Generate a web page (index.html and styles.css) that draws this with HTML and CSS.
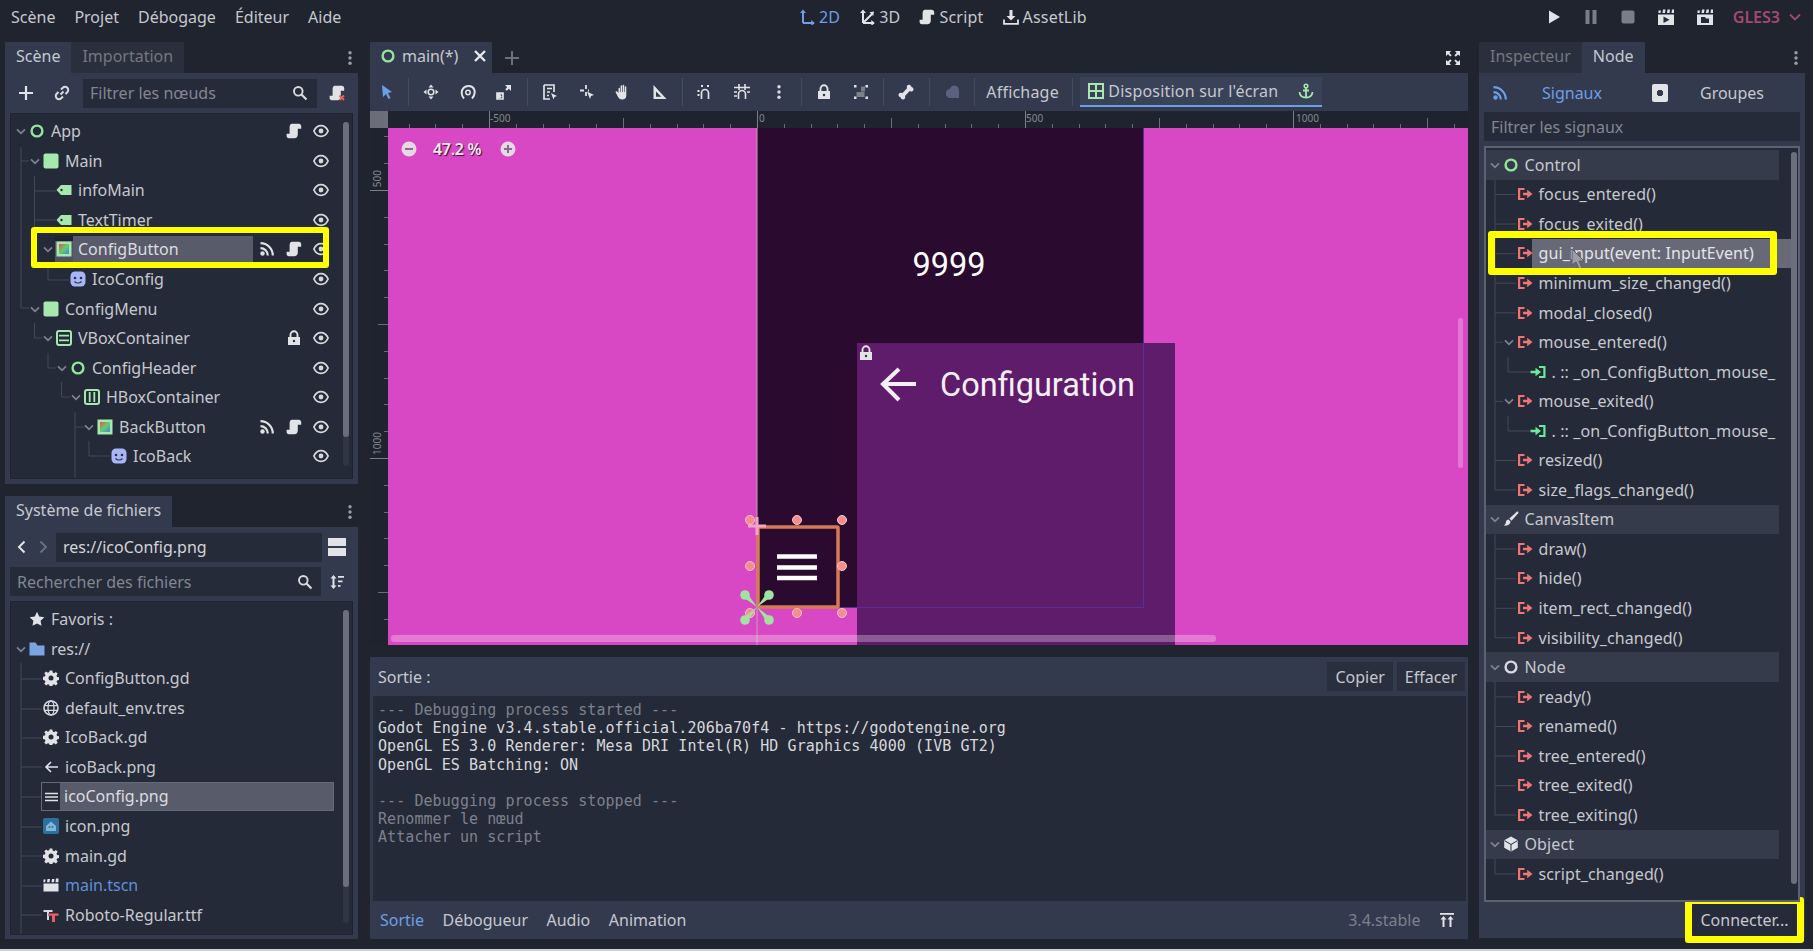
FILE: index.html
```html
<!DOCTYPE html>
<html lang="fr">
<head>
    <meta charset="UTF-8">
    <title>Godot Engine</title>
    <link rel="stylesheet" href="styles.css">
</head>
<body>
<svg class="defs" width="0" height="0">
    <defs>
        <linearGradient id="grad-btn" x1="0" y1="0" x2="1" y2="1">
            <stop offset="0" stop-color="#e8504f"/><stop offset=".5" stop-color="#5fd068"/><stop offset="1" stop-color="#4a7ff0"/>
        </linearGradient>
    </defs>
    <symbol id="i-eye" viewBox="0 0 16 16"><path d="M.9 8C2.7 4 5 2.6 8 2.6S13.3 4 15.1 8C13.3 12 11 13.4 8 13.4S2.7 12 .9 8z" fill="none" stroke="#d6d8dc" stroke-width="1.8"/><circle cx="8" cy="8" r="2.4" fill="#d6d8dc"/></symbol>
    <symbol id="i-script" viewBox="0 0 16 16"><path d="M6 .8h6.8c1.4 0 2.4 1 2.4 2.4v2.6h-3.4v5.6c0 2.2-1.3 3.800-3.4 3.800H2.800C1.400 15.200.6 14.200.6 13v-2.300h3V4.500C3.600 2.500 4.400.8 6 .8z" fill="#e2e3e6"/></symbol>
    <symbol id="i-script-x" viewBox="0 0 16 16"><path d="M6 .8h6.8c1.4 0 2.4 1 2.4 2.4v2.6h-3.4v5.6c0 2.2-1.3 3.800-3.4 3.800H2.800C1.400 15.200.6 14.200.6 13v-2.300h3V4.500C3.600 2.500 4.400.8 6 .8z" fill="#e2e3e6"/><path d="M10.500 10.500l4.500 4.500m0-4.500l-4.500 4.500" stroke="#ee5f5f" stroke-width="1.8"/></symbol>
    <symbol id="i-signal" viewBox="0 0 16 16"><circle cx="3.500" cy="12.500" r="2.200" fill="#e0e1e4"/><path d="M1.500 7.200a7.300 7.300 0 0 1 7.300 7.300M1.500 2.200a12.300 12.300 0 0 1 12.300 12.300" fill="none" stroke="#e0e1e4" stroke-width="2.2"/></symbol>
    <symbol id="i-signal-b" viewBox="0 0 16 16"><circle cx="3.500" cy="12.500" r="2.200" fill="#6d9fe6"/><path d="M1.500 7.200a7.300 7.300 0 0 1 7.300 7.300M1.500 2.200a12.300 12.300 0 0 1 12.300 12.300" fill="none" stroke="#6d9fe6" stroke-width="2.2"/></symbol>
    <symbol id="i-chev" viewBox="0 0 12 16"><path d="M2 6.300l4 4 4-4" fill="none" stroke="#7f838f" stroke-width="1.7"/></symbol>
    <symbol id="i-node-g" viewBox="0 0 16 16"><circle cx="8" cy="8" r="5.400" fill="none" stroke="#95e39e" stroke-width="2.4"/></symbol>
    <symbol id="i-node-w" viewBox="0 0 16 16"><circle cx="8" cy="8" r="5.400" fill="none" stroke="#d8dade" stroke-width="2.4"/></symbol>
    <symbol id="i-control" viewBox="0 0 16 16"><rect x=".5" y=".5" width="15" height="15" rx="2" fill="#a6e8ae"/></symbol>
    <symbol id="i-label" viewBox="0 0 16 16"><path d="M.5 8L5 3h10.500v10H5z" fill="#a6e8ae"/><circle cx="5.500" cy="8" r="1.200" fill="#252a38"/></symbol>
    <symbol id="i-tbtn" viewBox="0 0 16 16"><rect x=".5" y=".5" width="15" height="15" fill="#a6e8ae"/><rect x="3" y="3" width="10" height="10" fill="url(#grad-btn)"/></symbol>
    <symbol id="i-face" viewBox="0 0 16 16"><rect x=".5" y=".5" width="15" height="15" rx="4.500" fill="#a8b6f8"/><circle cx="5" cy="7" r="1.300" fill="#2c3142"/><circle cx="11" cy="7" r="1.300" fill="#2c3142"/><path d="M4.500 10.500c2 2 5 2 7 0" fill="none" stroke="#2c3142" stroke-width="1.2"/></symbol>
    <symbol id="i-vbox" viewBox="0 0 16 16"><rect x="1" y="1" width="14" height="14" rx="2" fill="none" stroke="#a6e8ae" stroke-width="2"/><path d="M3 5.700h10M3 10.300h10" stroke="#a6e8ae" stroke-width="1.8"/></symbol>
    <symbol id="i-hbox" viewBox="0 0 16 16"><rect x="1" y="1" width="14" height="14" rx="2" fill="none" stroke="#a6e8ae" stroke-width="2"/><path d="M5.700 3v10M10.300 3v10" stroke="#a6e8ae" stroke-width="1.8"/></symbol>
    <symbol id="i-lock" viewBox="0 0 16 16"><path d="M4.500 7V4.800a3.500 3.500 0 0 1 7 0V7" fill="none" stroke="#e2e3e6" stroke-width="1.9"/><path d="M2 7h12v8H2z" fill="#e2e3e6"/><circle cx="8" cy="11" r="1.200" fill="#2c3142"/></symbol>
    <symbol id="i-plus" viewBox="0 0 16 16"><path d="M8 1v14M1 8h14" stroke="#e2e3e6" stroke-width="2.2"/></symbol>
    <symbol id="i-plus-dim" viewBox="0 0 16 16"><path d="M8 1v14M1 8h14" stroke="#6d717d" stroke-width="2"/></symbol>
    <symbol id="i-close" viewBox="0 0 16 16"><path d="M3 3l10 10M13 3L3 13" stroke="#e8e9ec" stroke-width="2.4"/></symbol>
    <symbol id="i-link" viewBox="0 0 16 16"><path d="M6.500 9.500l3-3M7 4.500l1.800-1.800a3 3 0 0 1 4.500 4.500L11.500 9M9 11.500l-1.800 1.800a3 3 0 0 1-4.500-4.500L4.500 7" fill="none" stroke="#d8dade" stroke-width="2"/></symbol>
    <symbol id="i-search" viewBox="0 0 16 16"><circle cx="6.300" cy="6.300" r="4.300" fill="none" stroke="#d8dade" stroke-width="1.9"/><path d="M9.500 9.500l5 5" stroke="#d8dade" stroke-width="2.2"/></symbol>
    <symbol id="i-dots" viewBox="0 0 16 16"><circle cx="8" cy="2.800" r="1.700" fill="#9a9da6"/><circle cx="8" cy="8" r="1.700" fill="#9a9da6"/><circle cx="8" cy="13.200" r="1.700" fill="#9a9da6"/></symbol>
    <symbol id="i-dots-w" viewBox="0 0 16 16"><circle cx="8" cy="2.800" r="1.700" fill="#dcdde1"/><circle cx="8" cy="8" r="1.700" fill="#dcdde1"/><circle cx="8" cy="13.200" r="1.700" fill="#dcdde1"/></symbol>
    <symbol id="i-prev" viewBox="0 0 16 16"><path d="M10.500 2.500L5 8l5.500 5.500" fill="none" stroke="#e2e3e6" stroke-width="2"/></symbol>
    <symbol id="i-next" viewBox="0 0 16 16"><path d="M5.500 2.500L11 8l-5.500 5.500" fill="none" stroke="#6d717d" stroke-width="1.8"/></symbol>
    <symbol id="i-split" viewBox="0 0 20 20"><path d="M1 1h18v8H1zM1 11h18v8H1z" fill="#e2e3e6"/></symbol>
    <symbol id="i-sort" viewBox="0 0 16 16"><path d="M4.500 1l3 3.500h-2v7h2l-3 3.500-3-3.500h2v-7h-2z" fill="#e2e3e6"/><path d="M9 2h6v1.800H9zM9 6.500h4.500v1.800H9zM9 11h2.500v1.800H9z" fill="#e2e3e6"/></symbol>
    <symbol id="i-star" viewBox="0 0 16 16"><path d="M8 .8l2.200 4.700 5.100.7-3.700 3.500.9 5.100L8 12.400l-4.500 2.400.9-5.100L.7 6.200l5.100-.7z" fill="#e2e3e6"/></symbol>
    <symbol id="i-folder" viewBox="0 0 16 16"><path d="M.5 1.500h6l2 3h7v10H.5z" fill="#7aa4e4"/></symbol>
    <symbol id="i-gear" viewBox="0 0 16 16"><path d="M6.700.5h2.600l.4 2.100 1.400.6 1.800-1.200 1.800 1.800-1.200 1.800.6 1.400 2.100.4v2.600l-2.100.4-.6 1.400 1.200 1.800-1.800 1.800-1.800-1.200-1.400.6-.4 2.100H6.700l-.4-2.100-1.400-.6-1.800 1.200-1.800-1.800 1.200-1.800-.6-1.400-2.100-.4V6.900l2.100-.4.6-1.400-1.200-1.800 1.800-1.800 1.800 1.200 1.400-.6z" fill="#e2e3e6"/><circle cx="8" cy="8" r="2.500" fill="#252a38"/></symbol>
    <symbol id="i-globe" viewBox="0 0 16 16"><circle cx="8" cy="8" r="7" fill="none" stroke="#d8dade" stroke-width="1.6"/><ellipse cx="8" cy="8" rx="3" ry="7" fill="none" stroke="#d8dade" stroke-width="1.3"/><path d="M1 5.700h14M1 10.300h14" stroke="#d8dade" stroke-width="1.3"/></symbol>
    <symbol id="i-arrow" viewBox="0 0 16 16"><path d="M8 3L3 8l5 5M3 8h12" fill="none" stroke="#e2e3e6" stroke-width="1.6"/></symbol>
    <symbol id="i-burger" viewBox="0 0 16 16"><path d="M2 4.500h13M2 8h13M2 11.500h13" stroke="#e2e3e6" stroke-width="1.5"/></symbol>
    <symbol id="i-png" viewBox="0 0 16 16"><rect width="16" height="16" rx="2" fill="#2d6f9f"/><path d="M8 3.500l5 4.500v5H3V8z" fill="#83b5d8"/><circle cx="6.500" cy="9" r="1" fill="#2d6f9f"/><circle cx="9.500" cy="9" r="1" fill="#2d6f9f"/></symbol>
    <symbol id="i-scene" viewBox="0 0 16 16"><path d="M.5 6.500h15v8H.5zM.5 2.500h2.200l-.6 2.800H.5zM4.500 2H7l-.5 3.300H4zM9 2h2.500L11 5.300H8.500zM13 1.500h2.500v3.800h-3z" fill="#e2e3e6"/></symbol>
    <symbol id="i-font" viewBox="0 0 16 16"><path d="M.5 3h9v2H6v8H4V5H.5z" fill="#d8dade"/><path d="M5 6.500h10.500v2.200H12V15H9V8.700H5z" fill="#ee5f5f"/></symbol>
    <symbol id="i-out" viewBox="0 0 16 16"><path d="M1 2h6.500v2H3.200v8h4.300v2H1z" fill="#f07474"/><path d="M6 6.800h4.200V3.800L15.500 8l-5.300 4.200V9.200H6z" fill="#f07474"/></symbol>
    <symbol id="i-in" viewBox="0 0 16 16"><path d="M9 2h6.500v12H9v-2h4.300V4H9z" fill="#6ee89a"/><path d="M.5 6.800h5V3.800L11 8l-5.500 4.200V9.200h-5z" fill="#6ee89a"/></symbol>
    <symbol id="i-brush" viewBox="0 0 16 16"><path d="M15 .8c.6.5.5 1 0 1.700L8.500 9.800 6.400 7.600 13.500.9c.5-.4 1-.5 1.500-.1z" fill="#e2e3e6"/><path d="M5.500 8.600l2 2c0 2.800-3 4.600-6.800 3.900 1.800-1.200 2-2 2.200-3.600.2-1.200 1.300-2.200 2.600-2.300z" fill="#e2e3e6"/></symbol>
    <symbol id="i-cube" viewBox="0 0 16 16"><path d="M8 .5l6.800 3.800v7.400L8 15.500 1.200 11.700V4.300z" fill="#e2e3e6"/><path d="M8 8.500V15M1.500 4.600L8 8.500l6.500-3.900" fill="none" stroke="#252a38" stroke-width="1"/></symbol>
    <symbol id="i-2d" viewBox="0 0 16 16"><path d="M4 14V3M4 14h11" fill="none" stroke="#6d9fe6" stroke-width="2"/><path d="M4 .5L7 4H1zM15.800 14l-3.500 3v-6z" fill="#6d9fe6"/></symbol>
    <symbol id="i-3d" viewBox="0 0 16 16"><path d="M4 14V3M4 14l9-9M4 14h11" fill="none" stroke="#e2e3e6" stroke-width="2"/><path d="M4 .5L7 4H1zM15 2.500L14.200 7l-3.700-3.700zM15.800 14l-3.500 3v-6z" fill="#e2e3e6"/></symbol>
    <symbol id="i-asset" viewBox="0 0 16 16"><path d="M6.500 1h3v6h3L8 11.500 3.500 7h3z" fill="#e2e3e6"/><path d="M1 10.500v4.300h14v-4.300" fill="none" stroke="#e2e3e6" stroke-width="1.8"/></symbol>
    <symbol id="i-play" viewBox="0 0 16 16"><path d="M3 1.500v13L14 8z" fill="#e2e3e6"/></symbol>
    <symbol id="i-pause" viewBox="0 0 16 16"><path d="M2.500 1h4v14h-4zM9.500 1h4v14h-4z" fill="#7a7e8a"/></symbol>
    <symbol id="i-stop" viewBox="0 0 16 16"><rect x="1.500" y="1.500" width="13" height="13" rx="2" fill="#7a7e8a"/></symbol>
    <symbol id="i-play-scene" viewBox="0 0 18 18"><path d="M1 6.500h16V17H1zM1.500 2.500H4L3.500 5h-2zM6 1.500h2.500L8 5H5.500zM10.500 1.500H13L12.500 5H10zM15 1.500h2V5h-2.500z" fill="#e2e3e6"/><path d="M6.500 8.500V15l6-3.200z" fill="#252a38"/></symbol>
    <symbol id="i-play-custom" viewBox="0 0 18 18"><path d="M1 6.500h16V17H1zM1.500 2.500H4L3.500 5h-2zM6 1.500h2.500L8 5H5.500zM10.500 1.500H13L12.500 5H10zM15 1.500h2V5h-2.500z" fill="#e2e3e6"/><path d="M5 9h4l1 1.500h3V15H5z" fill="#252a38"/></symbol>
    <symbol id="i-chev-red" viewBox="0 0 12 16"><path d="M1 5.500l5 5 5-5" fill="none" stroke="#a14a70" stroke-width="1.8"/></symbol>
    <symbol id="i-full" viewBox="0 0 16 16"><path d="M1 1h5L4.400 2.900l2.300 2.300-1.400 1.400L3 4.300 1 6zM15 1v5l-1.900-1.600-2.300 2.300-1.400-1.400L11.700 3 10 1zM1 15v-5l1.900 1.600 2.300-2.300 1.400 1.400L4.300 13 6 15zM15 15h-5l1.600-1.900-2.300-2.300 1.400-1.400 2.300 2.300L15 10z" fill="#e2e3e6"/></symbol>
    <symbol id="i-select" viewBox="0 0 16 16"><path d="M3 1l10 7-4 1 2.500 5-2 1L7 10l-3 3z" fill="#6d9fe6"/></symbol>
    <symbol id="i-move" viewBox="0 0 16 16"><path d="M8 .5l2.500 3h-5zM8 15.500l-2.500-3h5zM.5 8l3-2.500v5zM15.500 8l-3 2.500v-5z" fill="#e2e3e6"/><circle cx="8" cy="8" r="2.800" fill="none" stroke="#e2e3e6" stroke-width="1.6"/></symbol>
    <symbol id="i-rotate" viewBox="0 0 16 16"><path d="M4 14.500C1 11.500 1 6.500 3.500 4S12 1 14 5c1.300 3 .7 6.500-2 9.500" fill="none" stroke="#e2e3e6" stroke-width="2"/><circle cx="8" cy="8.500" r="2.200" fill="none" stroke="#e2e3e6" stroke-width="1.5"/></symbol>
    <symbol id="i-scale" viewBox="0 0 16 16"><path d="M9 1h6v6l-2.200-2.200-2 2-1.600-1.600 2-2zM1 15V9h6v1.500H4l2 2L4.500 14z" fill="#e2e3e6"/><path d="M1 9h6v6H1z" fill="none" stroke="#e2e3e6" stroke-width="1.7"/></symbol>
    <symbol id="i-listsel" viewBox="0 0 16 16"><path d="M2 1h10v7M2 1v14h6M5 4.500h5M5 8h3M5 11.500h2" fill="none" stroke="#e2e3e6" stroke-width="1.7"/><path d="M9 9l6 3-2.500 1-1 2.500z" fill="#e2e3e6"/></symbol>
    <symbol id="i-pivot" viewBox="0 0 16 16"><path d="M7 1v4M7 8v4M1 6.500h4M9 6.500h1" stroke="#e2e3e6" stroke-width="1.8"/><path d="M8 7.500l7 3.500-3 1-1 3z" fill="#e2e3e6"/></symbol>
    <symbol id="i-hand" viewBox="0 0 16 16"><path d="M3.500 9V4.500c0-1 1.500-1 1.500 0V8h.6V2c0-1 1.500-1 1.500 0v6h.6V1.500c0-1 1.500-1 1.500 0V8h.6V3c0-1 1.500-1 1.500 0v8.500c0 2.500-1.500 4-4 4s-3.500-1-4.500-3L.7 8.500c-.5-1 .8-1.700 1.500-.9z" fill="#e2e3e6"/></symbol>
    <symbol id="i-ruler" viewBox="0 0 16 16"><path d="M1.500 1v14h13zM4 7.500v5.300h5.300z" fill="#e2e3e6" fill-rule="evenodd"/></symbol>
    <symbol id="i-snap" viewBox="0 0 16 16"><path d="M4.500 15V9a3.500 3.500 0 0 1 7 0v6" fill="none" stroke="#e2e3e6" stroke-width="1.7"/><path d="M4 1h2v2H4zM10 1h2v2h-2zM.5 6h2v2h-2zM.5 10h2v2h-2z" fill="#e2e3e6"/></symbol>
    <symbol id="i-snapgrid" viewBox="0 0 16 16"><path d="M4.500 15v-5a3.500 3.500 0 0 1 7 0v5M5 0v6M11 0v6M0 3.500h16M0 8h3M13 8h3M0 12h3" fill="none" stroke="#e2e3e6" stroke-width="1.6"/></symbol>
    <symbol id="i-group" viewBox="0 0 16 16"><path d="M1 1h2.500v2.500H1zM12.500 1H15v2.500h-2.500zM1 12.500h2.500V15H1zM12.500 12.500H15V15h-2.500z" fill="#e2e3e6"/><path d="M8 2.500h4v5H8zM3.500 8h8v5h-8z" fill="#7d808c"/></symbol>
    <symbol id="i-bone" viewBox="0 0 16 16"><path d="M11 .8c1.300 0 2.300 1 2.400 2.100 1.200.1 2.100 1.100 2.100 2.300 0 2-2.300 3-3.800 1.900L7 12c.8 1.700-.3 3.500-2.200 3.500-1.200 0-2.100-1-2.200-2.200C1.500 13.200.5 12.200.5 11c0-2 2.300-2.900 3.800-1.800L9 4.200C8.300 2.500 9.200.8 11 .8z" fill="#e2e3e6"/></symbol>
    <symbol id="i-cam" viewBox="0 0 16 16"><path d="M2 9c0-3 2-4 4-4 .5-2 2-3.500 4.500-3.500 3 0 4.500 2 4.500 6V14H5l-3-2.500z" fill="#5c6180"/></symbol>
    <symbol id="i-layout" viewBox="0 0 16 16"><rect x="1" y="1" width="14" height="14" fill="none" stroke="#a6e8ae" stroke-width="2"/><path d="M8 1v14M1 8h14" stroke="#a6e8ae" stroke-width="2"/></symbol>
    <symbol id="i-anchor" viewBox="0 0 16 16"><circle cx="8" cy="3" r="1.800" fill="none" stroke="#a6e8ae" stroke-width="1.5"/><path d="M8 5v9.500M5 7.500h6M1.500 9c.3 3.500 3 5.500 6.500 5.500s6.200-2 6.500-5.500" fill="none" stroke="#a6e8ae" stroke-width="1.8"/></symbol>
    <symbol id="i-expand" viewBox="0 0 16 16"><path d="M1 1h14v1.800H1z" fill="#e2e3e6"/><path d="M4.500 4l3 3.500h-2V15h-2V7.500h-2zM11.500 4l3 3.500h-2V15h-2V7.500h-2z" fill="#e2e3e6"/></symbol>
    <symbol id="i-circle-minus" viewBox="0 0 16 16"><circle cx="8" cy="8" r="7.500" fill="#e6d8e4"/><path d="M4 8h8" stroke="#8a6a86" stroke-width="2"/></symbol>
    <symbol id="i-circle-plus" viewBox="0 0 16 16"><circle cx="8" cy="8" r="7.500" fill="#e6d8e4"/><path d="M4 8h8M8 4v8" stroke="#8a6a86" stroke-width="2"/></symbol>
</svg>

<header class="menubar">
    <nav class="menu">
        <span>Scène</span><span>Projet</span><span>Débogage</span><span>Éditeur</span><span>Aide</span>
    </nav>
    <nav class="screens">
        <span class="screen active"><svg class="ic"><use href="#i-2d"/></svg>2D</span>
        <span class="screen"><svg class="ic"><use href="#i-3d"/></svg>3D</span>
        <span class="screen"><svg class="ic"><use href="#i-script"/></svg>Script</span>
        <span class="screen"><svg class="ic"><use href="#i-asset"/></svg>AssetLib</span>
    </nav>
    <div class="runbar">
        <svg class="ic"><use href="#i-play"/></svg>
        <svg class="ic"><use href="#i-pause"/></svg>
        <svg class="ic"><use href="#i-stop"/></svg>
        <svg class="ic big"><use href="#i-play-scene"/></svg>
        <svg class="ic big"><use href="#i-play-custom"/></svg>
        <span class="driver">GLES3</span>
        <svg class="chev"><use href="#i-chev-red"/></svg>
    </div>
</header>

<main class="workspace">
    <div class="col-left">
        <section class="dock dock-scene">
            <div class="tabs">
                <span class="tab active">Scène</span><span class="tab">Importation</span>
                <svg class="ic tab-menu"><use href="#i-dots"/></svg>
            </div>
            <div class="panel">
                <div class="filter-row">
                    <svg class="ic btn-add"><use href="#i-plus"/></svg>
                    <svg class="ic btn-link"><use href="#i-link"/></svg>
                    <div class="field scene-filter"><span class="hint">Filtrer les nœuds</span><svg class="ic"><use href="#i-search"/></svg></div>
                    <svg class="ic btn-end"><use href="#i-script-x"/></svg>
                </div>
                <div class="tree scene-tree">
                    <svg class="guides" width="343" height="366" viewBox="10 113 343 366"><path d="M21 147V308M21 161H29M21 308H29M34.500 176V250M34.500 191H56M34.500 220H56M48 265V280H69M34.500 323V338H42M48 353V368H56M61.500 382V397H70M75 412V479M75 427H84M89 441V456H110"/></svg>
                    <div class="row d0"><svg class="chev"><use href="#i-chev"/></svg><svg class="ic"><use href="#i-node-g"/></svg><span>App</span><span class="acts"><svg class="ic"><use href="#i-script"/></svg><svg class="ic"><use href="#i-eye"/></svg></span></div>
                    <div class="row d1"><svg class="chev"><use href="#i-chev"/></svg><svg class="ic"><use href="#i-control"/></svg><span>Main</span><span class="acts"><svg class="ic"><use href="#i-eye"/></svg></span></div>
                    <div class="row d2"><i class="nochev"></i><svg class="ic"><use href="#i-label"/></svg><span>infoMain</span><span class="acts"><svg class="ic"><use href="#i-eye"/></svg></span></div>
                    <div class="row d2"><i class="nochev"></i><svg class="ic"><use href="#i-label"/></svg><span>TextTimer</span><span class="acts"><svg class="ic"><use href="#i-eye"/></svg></span></div>
                    <div class="row d2"><svg class="chev"><use href="#i-chev"/></svg><span class="picked"><span class="picked-icon"><svg class="ic"><use href="#i-tbtn"/></svg></span><span class="picked-name">ConfigButton</span></span><span class="acts"><svg class="ic"><use href="#i-signal"/></svg><svg class="ic"><use href="#i-script"/></svg><svg class="ic"><use href="#i-eye"/></svg></span></div>
                    <div class="row d3"><i class="nochev"></i><svg class="ic"><use href="#i-face"/></svg><span>IcoConfig</span><span class="acts"><svg class="ic"><use href="#i-eye"/></svg></span></div>
                    <div class="row d1"><svg class="chev"><use href="#i-chev"/></svg><svg class="ic"><use href="#i-control"/></svg><span>ConfigMenu</span><span class="acts"><svg class="ic"><use href="#i-eye"/></svg></span></div>
                    <div class="row d2"><svg class="chev"><use href="#i-chev"/></svg><svg class="ic"><use href="#i-vbox"/></svg><span>VBoxContainer</span><span class="acts"><svg class="ic"><use href="#i-lock"/></svg><svg class="ic"><use href="#i-eye"/></svg></span></div>
                    <div class="row d3"><svg class="chev"><use href="#i-chev"/></svg><svg class="ic"><use href="#i-node-g"/></svg><span>ConfigHeader</span><span class="acts"><svg class="ic"><use href="#i-eye"/></svg></span></div>
                    <div class="row d4"><svg class="chev"><use href="#i-chev"/></svg><svg class="ic"><use href="#i-hbox"/></svg><span>HBoxContainer</span><span class="acts"><svg class="ic"><use href="#i-eye"/></svg></span></div>
                    <div class="row d5"><svg class="chev"><use href="#i-chev"/></svg><svg class="ic"><use href="#i-tbtn"/></svg><span>BackButton</span><span class="acts"><svg class="ic"><use href="#i-signal"/></svg><svg class="ic"><use href="#i-script"/></svg><svg class="ic"><use href="#i-eye"/></svg></span></div>
                    <div class="row d6"><i class="nochev"></i><svg class="ic"><use href="#i-face"/></svg><span>IcoBack</span><span class="acts"><svg class="ic"><use href="#i-eye"/></svg></span></div>
                    <div class="row d6"><span class="acts"><svg class="ic"><use href="#i-eye"/></svg></span></div>
                    <div class="scroll scene-scroll"><b></b></div>
                    <div class="mark mark-config"></div>
                </div>
            </div>
        </section>

        <section class="dock dock-files">
            <div class="tabs">
                <span class="tab active">Système de fichiers</span>
                <svg class="ic tab-menu"><use href="#i-dots"/></svg>
            </div>
            <div class="panel">
                <div class="path-row">
                    <svg class="ic"><use href="#i-prev"/></svg>
                    <svg class="ic"><use href="#i-next"/></svg>
                    <div class="field path-field">res://icoConfig.png</div>
                    <svg class="ic split"><use href="#i-split"/></svg>
                </div>
                <div class="search-row">
                    <div class="field file-search"><span class="hint">Rechercher des fichiers</span><svg class="ic"><use href="#i-search"/></svg></div>
                    <svg class="ic"><use href="#i-sort"/></svg>
                </div>
                <div class="tree file-tree">
                    <svg class="guides" width="343" height="334" viewBox="10 601 343 334"><path d="M21 663V935M21 679H42M21 709H42M21 738H42M21 767H42M21 797H42M21 827H42M21 856H42M21 886H42M21 915H42"/></svg>
                    <div class="row d0"><i class="nochev"></i><svg class="ic"><use href="#i-star"/></svg><span>Favoris :</span></div>
                    <div class="row d0"><svg class="chev"><use href="#i-chev"/></svg><svg class="ic"><use href="#i-folder"/></svg><span>res://</span></div>
                    <div class="row d1"><i class="nochev"></i><svg class="ic"><use href="#i-gear"/></svg><span>ConfigButton.gd</span></div>
                    <div class="row d1"><i class="nochev"></i><svg class="ic"><use href="#i-globe"/></svg><span>default_env.tres</span></div>
                    <div class="row d1"><i class="nochev"></i><svg class="ic"><use href="#i-gear"/></svg><span>IcoBack.gd</span></div>
                    <div class="row d1"><i class="nochev"></i><svg class="ic"><use href="#i-arrow"/></svg><span>icoBack.png</span></div>
                    <div class="row d1"><i class="nochev"></i><span class="file-picked"><span class="file-picked-icon"><svg class="ic"><use href="#i-burger"/></svg></span><span class="file-picked-name">icoConfig.png</span></span></div>
                    <div class="row d1"><i class="nochev"></i><svg class="ic"><use href="#i-png"/></svg><span>icon.png</span></div>
                    <div class="row d1"><i class="nochev"></i><svg class="ic"><use href="#i-gear"/></svg><span>main.gd</span></div>
                    <div class="row d1"><i class="nochev"></i><svg class="ic"><use href="#i-scene"/></svg><span class="open-scene">main.tscn</span></div>
                    <div class="row d1"><i class="nochev"></i><svg class="ic"><use href="#i-font"/></svg><span>Roboto-Regular.ttf</span></div>
                    <div class="scroll file-scroll"><b></b></div>
                </div>
            </div>
        </section>
    </div>

    <div class="col-center">
        <div class="tabs scene-tabs">
            <span class="tab active doc-tab"><svg class="ic"><use href="#i-node-g"/></svg><span>main(*)</span><svg class="ic close"><use href="#i-close"/></svg></span>
            <svg class="ic new-tab"><use href="#i-plus-dim"/></svg>
            <svg class="ic fullscreen"><use href="#i-full"/></svg>
        </div>
        <div class="toolbar">
            <span class="tool first"><svg class="ic"><use href="#i-select"/></svg></span><i class="sep"></i>
            <span class="tool"><svg class="ic"><use href="#i-move"/></svg></span>
            <span class="tool"><svg class="ic"><use href="#i-rotate"/></svg></span>
            <span class="tool"><svg class="ic"><use href="#i-scale"/></svg></span><i class="sep"></i>
            <span class="tool"><svg class="ic"><use href="#i-listsel"/></svg></span>
            <span class="tool"><svg class="ic"><use href="#i-pivot"/></svg></span>
            <span class="tool"><svg class="ic"><use href="#i-hand"/></svg></span>
            <span class="tool"><svg class="ic"><use href="#i-ruler"/></svg></span><i class="sep"></i>
            <span class="tool"><svg class="ic"><use href="#i-snap"/></svg></span>
            <span class="tool"><svg class="ic"><use href="#i-snapgrid"/></svg></span>
            <span class="tool"><svg class="ic"><use href="#i-dots-w"/></svg></span><i class="sep"></i>
            <span class="tool"><svg class="ic"><use href="#i-lock"/></svg></span>
            <span class="tool"><svg class="ic"><use href="#i-group"/></svg></span><i class="sep"></i>
            <span class="tool"><svg class="ic"><use href="#i-bone"/></svg></span><i class="sep"></i>
            <span class="tool"><svg class="ic"><use href="#i-cam"/></svg></span><i class="sep"></i>
            <span class="view-menu">Affichage</span><i class="sep"></i>
            <span class="layout-btn"><svg class="ic"><use href="#i-layout"/></svg><span>Disposition sur l'écran</span><svg class="ic"><use href="#i-anchor"/></svg></span>
        </div>
        <div class="viewport">
            <div class="corner"></div>
            <div class="ruler-top"><span class="tick-a">-500</span><span class="tick-b">0</span><span class="tick-c">500</span><span class="tick-d">1000</span></div>
            <div class="ruler-left"><span class="vtick-a">500</span><span class="vtick-b">1000</span></div>
            <div class="canvas">
                <div class="game-root"><span class="score">9999</span></div>
                <div class="config-menu"><span class="config-title">Configuration</span></div>
                <div class="root-outline"></div>
                <svg class="gizmos" width="1079" height="517" viewBox="388 128 1079 517">
                    <g transform="translate(858 345)"><use href="#i-lock" width="16" height="16"/></g>
                    <path d="M916 384H885M899 369L883 384L899 400" fill="none" stroke="#f4eef5" stroke-width="4"/>
                    <path d="M777 556.500H817M777 567.500H817M777 578H817" stroke="#fff" stroke-width="4.500"/>
                    <path d="M757 128V645" stroke="#c3a0b8" stroke-width="1"/>
                    <rect x="758" y="527" width="80" height="80" rx="1" fill="none" stroke="#d67a55" stroke-width="3.500"/>
                    <path d="M748 526H766M757 517V535" stroke="#f0a6c8" stroke-width="3"/>
                    <g fill="#f68d8d" stroke="#f2c8cc">
                        <circle cx="750" cy="520" r="4.500"/><circle cx="797" cy="520" r="4.500"/><circle cx="842" cy="520" r="4.500"/>
                        <circle cx="750" cy="566" r="4.500"/><circle cx="842" cy="566" r="4.500"/>
                        <circle cx="750" cy="613" r="4.500"/><circle cx="797" cy="613" r="4.500"/><circle cx="842" cy="613" r="4.500"/>
                    </g>
                    <g fill="#a2e2a0">
                        <path d="M757 607L743 597L747 593zM757 607L771 597L767 593zM757 607L743 618L747 622zM757 607L771 618L767 622z"/>
                        <circle cx="745" cy="595" r="4.800"/><circle cx="769" cy="595" r="4.800"/><circle cx="745" cy="620" r="4.800"/><circle cx="769" cy="620" r="4.800"/>
                    </g>
                </svg>
                <div class="zoom-box">
                    <svg class="ic"><use href="#i-circle-minus"/></svg><span class="zoom-val">47.2 %</span><svg class="ic"><use href="#i-circle-plus"/></svg>
                </div>
                <div class="h-scroll"></div>
                <div class="v-scroll"></div>
            </div>
        </div>
        <section class="output">
            <div class="output-head">
                <span>Sortie :</span>
                <span class="out-btn">Copier</span><span class="out-btn">Effacer</span>
            </div>
            <pre class="log"><span class="dim">--- Debugging process started ---</span>
Godot Engine v3.4.stable.official.206ba70f4 - https://godotengine.org
OpenGL ES 3.0 Renderer: Mesa DRI Intel(R) HD Graphics 4000 (IVB GT2)
OpenGL ES Batching: ON

<span class="dim">--- Debugging process stopped ---
Renommer le nœud
Attacher un script</span></pre>
            <div class="output-foot">
                <span class="active">Sortie</span><span>Débogueur</span><span>Audio</span><span>Animation</span>
                <span class="version">3.4.stable</span>
                <svg class="ic"><use href="#i-expand"/></svg>
            </div>
        </section>
    </div>

    <div class="col-right">
        <div class="tabs">
            <span class="tab">Inspecteur</span><span class="tab active">Node</span>
            <svg class="ic tab-menu"><use href="#i-dots"/></svg>
        </div>
        <div class="panel signals-panel">
            <div class="node-tabs">
                <svg class="ic"><use href="#i-signal-b"/></svg>
                <span class="active">Signaux</span>
                <span class="group-ico"></span>
                <span>Groupes</span>
            </div>
            <div class="field sig-filter"><span class="hint">Filtrer les signaux</span></div>
            <div class="tree signal-tree">
                <svg class="guides" width="315" height="756" viewBox="1484 146 315 756"><path d="M1495 180V490M1495 194.500H1516M1495 224H1516M1495 253.700H1516M1495 283.200H1516M1495 312.800H1516M1495 342.300H1503M1495 401.400H1503M1495 460.500H1516M1495 490H1516M1508 357V372H1530M1508 416V431H1530M1495 534V638M1495 549H1516M1495 578.700H1516M1495 608.300H1516M1495 637.800H1516M1495 682V815M1495 696.900H1516M1495 726.500H1516M1495 756H1516M1495 785.600H1516M1495 815H1516M1495 859V874H1516"/></svg>
                <div class="row d0 group"><svg class="chev"><use href="#i-chev"/></svg><svg class="ic"><use href="#i-node-g"/></svg><span>Control</span></div>
                <div class="row d1"><i class="nochev"></i><svg class="ic"><use href="#i-out"/></svg><span>focus_entered()</span></div>
                <div class="row d1"><i class="nochev"></i><svg class="ic"><use href="#i-out"/></svg><span>focus_exited()</span></div>
                <div class="row d1 hovered"><i class="nochev"></i><svg class="ic"><use href="#i-out"/></svg><span>gui_input(event: InputEvent)</span>
                    <svg class="cursor" width="14" height="22" viewBox="0 0 14 22"><path d="M1 1v16l4-3 3 7 3-1-3-7h5z" fill="#9b9ea6" stroke="#5a5d68"/></svg>
                </div>
                <div class="row d1"><i class="nochev"></i><svg class="ic"><use href="#i-out"/></svg><span>minimum_size_changed()</span></div>
                <div class="row d1"><i class="nochev"></i><svg class="ic"><use href="#i-out"/></svg><span>modal_closed()</span></div>
                <div class="row d1"><svg class="chev"><use href="#i-chev"/></svg><svg class="ic"><use href="#i-out"/></svg><span>mouse_entered()</span></div>
                <div class="row d2"><i class="nochev"></i><svg class="ic"><use href="#i-in"/></svg><span>. :: _on_ConfigButton_mouse_</span></div>
                <div class="row d1"><svg class="chev"><use href="#i-chev"/></svg><svg class="ic"><use href="#i-out"/></svg><span>mouse_exited()</span></div>
                <div class="row d2"><i class="nochev"></i><svg class="ic"><use href="#i-in"/></svg><span>. :: _on_ConfigButton_mouse_</span></div>
                <div class="row d1"><i class="nochev"></i><svg class="ic"><use href="#i-out"/></svg><span>resized()</span></div>
                <div class="row d1"><i class="nochev"></i><svg class="ic"><use href="#i-out"/></svg><span>size_flags_changed()</span></div>
                <div class="row d0 group"><svg class="chev"><use href="#i-chev"/></svg><svg class="ic"><use href="#i-brush"/></svg><span>CanvasItem</span></div>
                <div class="row d1"><i class="nochev"></i><svg class="ic"><use href="#i-out"/></svg><span>draw()</span></div>
                <div class="row d1"><i class="nochev"></i><svg class="ic"><use href="#i-out"/></svg><span>hide()</span></div>
                <div class="row d1"><i class="nochev"></i><svg class="ic"><use href="#i-out"/></svg><span>item_rect_changed()</span></div>
                <div class="row d1"><i class="nochev"></i><svg class="ic"><use href="#i-out"/></svg><span>visibility_changed()</span></div>
                <div class="row d0 group"><svg class="chev"><use href="#i-chev"/></svg><svg class="ic"><use href="#i-node-w"/></svg><span>Node</span></div>
                <div class="row d1"><i class="nochev"></i><svg class="ic"><use href="#i-out"/></svg><span>ready()</span></div>
                <div class="row d1"><i class="nochev"></i><svg class="ic"><use href="#i-out"/></svg><span>renamed()</span></div>
                <div class="row d1"><i class="nochev"></i><svg class="ic"><use href="#i-out"/></svg><span>tree_entered()</span></div>
                <div class="row d1"><i class="nochev"></i><svg class="ic"><use href="#i-out"/></svg><span>tree_exited()</span></div>
                <div class="row d1"><i class="nochev"></i><svg class="ic"><use href="#i-out"/></svg><span>tree_exiting()</span></div>
                <div class="row d0 group"><svg class="chev"><use href="#i-chev"/></svg><svg class="ic"><use href="#i-cube"/></svg><span>Object</span></div>
                <div class="row d1"><i class="nochev"></i><svg class="ic"><use href="#i-out"/></svg><span>script_changed()</span></div>
                <div class="scroll signal-scroll"><b></b></div>
                <div class="mark mark-signal"></div>
            </div>
            <div class="connect-row"><span class="connect">Connecter...</span></div>
        </div>
    </div>
</main>
<div class="bottom-line"></div>
</body>
</html>
```
FILE: styles.css
```css
* {
    box-sizing: border-box;
}
html, body {
    height: 100%;
}
body {
    margin: 0;
    width: 1813px;
    height: 951px;
    overflow: hidden;
    background: #20242f;
    color: #c6c8ce;
    font: 16px "Noto Sans", sans-serif;
}
.defs {
    position: absolute;
}
.ic {
    width: 16px;
    height: 16px;
    flex: none;
}
.chev {
    width: 12px;
    height: 16px;
    flex: none;
}
.nochev {
    width: 12px;
    flex: none;
}

/* top bar */
.menubar {
    display: grid;
    grid-template-columns: 799px 1fr auto;
    align-items: center;
    height: 34px;
    margin-bottom: 8px;
}
.menu {
    display: flex;
    gap: 19px;
    padding-left: 11px;
}
.screens {
    display: flex;
    gap: 19px;
    letter-spacing: .2px;
}
.screen {
    display: flex;
    align-items: center;
    gap: 4px;
}
.screen.active {
    color: #6d9fe6;
}
.runbar {
    display: flex;
    align-items: center;
    gap: 21px;
    padding-right: 12px;
}
.runbar .big {
    width: 18px;
    height: 18px;
}
.driver {
    margin-left: -2px;
    margin-right: -12px;
    color: #a14a70;
    font-weight: 600;
}

/* layout columns */
.workspace {
    display: flex;
    gap: 12px;
    padding-left: 5px;
    height: 897px;
}
.col-left {
    width: 353px;
    flex: none;
}
.col-center {
    width: 1098px;
    flex: none;
    margin-right: -1px;
}
.col-right {
    width: 326px;
    flex: none;
}
.dock-scene {
    height: 442px;
    margin-bottom: 12px;
}
.dock-files {
    height: 443px;
}

/* tabs and panels */
.tabs {
    display: flex;
    align-items: center;
    height: 31px;
}
.tab {
    display: flex;
    align-items: center;
    height: 31px;
    padding: 0 11px 3px;
    background: #2a2f3e;
    color: #74787f;
}
.tab.active {
    background: #343a4e;
    color: #c6c8ce;
}
.tab-menu {
    margin-left: auto;
}
.panel {
    background: #343a4e;
    padding: 0 5px;
}
.dock-scene .panel {
    height: 411px;
}
.dock-files .panel {
    height: 412px;
}
.field {
    display: flex;
    align-items: center;
    background: #262b3a;
    height: 29px;
    padding: 0 7px;
}
.hint {
    color: #82868f;
    flex: 1;
}
.filter-row {
    display: flex;
    align-items: center;
    height: 40px;
}
.btn-add {
    margin-left: 8px;
}
.btn-link {
    margin-left: 20px;
}
.scene-filter {
    width: 234px;
    margin-left: 13px;
}
.scene-filter .ic {
    margin-right: 2px;
}
.btn-end {
    margin-left: 12px;
}
.tree {
    position: relative;
    overflow: hidden;
    background: #252a38;
    border: 1px solid #1f2330;
}
.scene-tree {
    height: 366px;
    padding-top: 2.5px;
}
.guides {
    position: absolute;
    left: -1px;
    top: -1px;
    fill: none;
    stroke: #434857;
    stroke-width: 1;
}
.row {
    position: relative;
    display: flex;
    align-items: center;
    height: 29.55px;
    padding-right: 23px;
    white-space: nowrap;
}
.row > .ic {
    margin-left: 2px;
    margin-right: 6px;
}
.d0 { padding-left: 4px; }
.d1 { padding-left: 18px; }
.d2 { padding-left: 31px; }
.d3 { padding-left: 45px; }
.d4 { padding-left: 59px; }
.d5 { padding-left: 72px; }
.d6 { padding-left: 86px; }
.acts {
    display: flex;
    gap: 11px;
    margin-left: auto;
}
.picked {
    display: flex;
    align-items: stretch;
    height: 26px;
    width: 198px;
    flex: none;
    margin-left: 1px;
    color: #dcdde0;
}
.picked-icon {
    display: flex;
    align-items: center;
    justify-content: center;
    width: 18px;
    background: linear-gradient(#1f2330 0 20%, #4f5261 20%);
}
.picked-name {
    flex: 1;
    padding-left: 5px;
    line-height: 26px;
    background: #585b69;
}
.scroll {
    position: absolute;
    right: 3px;
    width: 6px;
    background: #313644;
    border-radius: 3px;
}
.scroll b {
    display: block;
    background: #6a6e7d;
    border-radius: 3px;
}
.scene-scroll {
    top: 8px;
    height: 344px;
}
.scene-scroll b {
    height: 315px;
}
.mark {
    position: absolute;
    border: 6px solid #ffff00;
    border-radius: 3px;
}
.mark-config {
    left: 20px;
    top: 113px;
    width: 298px;
    height: 41px;
}

/* file system dock */
.path-row {
    display: flex;
    align-items: center;
    height: 40px;
    padding-left: 4px;
    gap: 5px;
}
.path-field {
    width: 266px;
    color: #d2d4d8;
}
.split {
    width: 20px;
    height: 20px;
}
.search-row {
    display: flex;
    align-items: center;
    height: 29px;
    gap: 8px;
}
.file-search {
    width: 311px;
}
.file-search .ic {
    margin-right: 1px;
}
.file-tree {
    height: 334px;
    margin-top: 5px;
    padding-top: 2.5px;
}
.file-picked {
    display: flex;
    align-items: stretch;
    width: 293px;
    height: 29px;
    flex: none;
    border: 1px solid #666a78;
    color: #dcdde0;
}
.file-picked-icon {
    display: flex;
    align-items: center;
    justify-content: center;
    width: 18px;
    background: #252a38;
}
.file-picked-name {
    flex: 1;
    padding-left: 4px;
    line-height: 27px;
    background: #585b69;
}
.open-scene {
    color: #5f8fd8;
}
.file-scroll {
    top: 8px;
    height: 313px;
}
.file-scroll b {
    height: 277px;
}

/* 2D editor */
.doc-tab {
    width: 122px;
    padding: 0 10px 3px;
    gap: 6px;
}
.doc-tab .close {
    margin-left: 8px;
}
.new-tab {
    margin-left: 12px;
}
.fullscreen {
    margin-left: auto;
    margin-right: 7px;
}
.toolbar {
    display: flex;
    align-items: center;
    height: 38px;
    background: #343a4e;
    letter-spacing: .2px;
}
.tool {
    display: flex;
    align-items: center;
    justify-content: center;
    width: 36.6px;
    flex: none;
}
.tool.first {
    width: 34px;
}
.sep {
    width: 1px;
    height: 28px;
    margin: 0 4px;
    background: #454b5d;
    flex: none;
}
.view-menu {
    padding: 0 0 0 7px;
    width: 89px;
}
.layout-btn {
    display: flex;
    align-items: center;
    height: 30px;
    width: 242px;
    margin-left: 3px;
    padding: 0 8px;
    gap: 4px;
    background: #3a4258;
    border-bottom: 2px solid #6d9fe6;
}
.layout-btn span {
    flex: 1;
}
.viewport {
    display: grid;
    grid-template-columns: 18px 1fr;
    grid-template-rows: 17px 1fr;
    height: 534px;
}
.corner {
    background: #6b6e79;
}
.ruler-top {
    position: relative;
    background-color: #1f2330;
    background-image:
        repeating-linear-gradient(90deg, transparent 0 101px, #7b7f8a 101px 102px, transparent 102px 268px),
        repeating-linear-gradient(90deg, transparent 0 101px, #6a6e7a 101px 102px, transparent 102px 134px),
        repeating-linear-gradient(90deg, transparent 0 20.6px, #6a6e7a 20.6px 21.6px, transparent 21.6px 26.8px);
    background-size: 100% 17px, 100% 10px, 100% 4px;
    background-position: bottom;
    background-repeat: no-repeat;
}
.ruler-top span {
    position: absolute;
    top: 0;
    font-size: 10px;
    line-height: 14px;
    color: #84888f;
}
.tick-a { left: 102px; }
.tick-b { left: 371px; }
.tick-c { left: 638px; }
.tick-d { left: 908px; }
.ruler-left {
    position: relative;
    background-color: #1f2330;
    background-image:
        repeating-linear-gradient(180deg, transparent 0 62px, #7b7f8a 62px 63px, transparent 63px 268px),
        repeating-linear-gradient(180deg, transparent 0 62px, #6a6e7a 62px 63px, transparent 63px 134px),
        repeating-linear-gradient(180deg, transparent 0 8.4px, #6a6e7a 8.4px 9.4px, transparent 9.4px 26.8px);
    background-size: 18px 100%, 10px 100%, 4px 100%;
    background-position: right;
    background-repeat: no-repeat;
}
.ruler-left span {
    position: absolute;
    left: 1px;
    font-size: 10px;
    line-height: 12px;
    color: #84888f;
    writing-mode: vertical-rl;
    transform: rotate(180deg);
}
.vtick-a { top: 42px; }
.vtick-b { top: 304px; }
.canvas {
    position: relative;
    overflow: hidden;
    background: #d948c4;
}
.game-root {
    position: absolute;
    left: 369px;
    top: 0;
    width: 386px;
    height: 479px;
    background: #2a0a2e;
}
.score {
    position: absolute;
    left: 0;
    right: 2px;
    top: 115px;
    text-align: center;
    font: 32.5px/44px Roboto, sans-serif;
    color: #fff;
}
.config-menu {
    position: absolute;
    left: 469px;
    top: 215px;
    width: 318px;
    height: 302px;
    background: #5f1c6b;
}
.config-title {
    position: absolute;
    left: 83px;
    top: 20px;
    font: 32.5px/44px Roboto, sans-serif;
    color: #f6f0f6;
}
.root-outline {
    position: absolute;
    left: 369px;
    top: 0;
    width: 387px;
    height: 480px;
    border-right: 1px solid #55309a;
    border-bottom: 1px solid #55309a;
}
.gizmos {
    position: absolute;
    left: 0;
    top: 0;
}
.zoom-box {
    position: absolute;
    left: 13px;
    top: 10px;
    display: flex;
    align-items: center;
}
.zoom-val {
    width: 83px;
    padding-left: 16px;
    font-size: 16px;
    font-weight: 600;
    letter-spacing: -.3px;
    color: #f2e8f0;
    text-shadow: 1px 1px 1px #2a1030;
}
.h-scroll {
    position: absolute;
    left: 3px;
    top: 507px;
    width: 825px;
    height: 7px;
    border-radius: 3px;
    background: rgba(255, 255, 255, .28);
}
.v-scroll {
    position: absolute;
    left: 1070px;
    top: 190px;
    width: 5px;
    height: 150px;
    border-radius: 3px;
    background: rgba(255, 255, 255, .25);
}

/* output */
.output {
    margin-top: 12px;
    height: 282px;
    background: #343a4e;
}
.output-head {
    display: flex;
    align-items: center;
    height: 39px;
    padding: 0 3px 0 8px;
    gap: 4px;
}
.output-head > span:first-child {
    flex: 1;
}
.out-btn {
    display: flex;
    align-items: center;
    height: 29px;
    padding: 0 8px;
    background: #2a2f3e;
}
.log {
    margin: 0 2px 0 3px;
    padding: 5px;
    height: 205px;
    background: #252a38;
    font: 15px/18.2px "DejaVu Sans Mono", monospace;
    letter-spacing: .07px;
    color: #d6d8dc;
}
.log .dim {
    color: #7d818b;
}
.output-foot {
    display: flex;
    align-items: center;
    height: 38px;
    padding: 0 13px 0 10px;
    gap: 18.5px;
}
.output-foot .active {
    color: #6d9fe6;
}
.version {
    margin-left: auto;
    color: #7d818b;
}

/* node dock */
.col-right .tabs {
    padding-right: 1px;
}
.signals-panel {
    height: 865px;
    padding-top: 6px;
}
.node-tabs {
    display: flex;
    align-items: center;
    height: 28px;
    padding-left: 8px;
}
.node-tabs .active {
    margin-left: 34px;
    width: 108px;
    color: #6d9fe6;
}
.group-ico {
    width: 16px;
    height: 18px;
    margin-right: 32px;
    margin-left: 2px;
    background: radial-gradient(circle, #343a4e 0 3px, #e2e3e6 3.5px);
    border-radius: 2px;
}
.sig-filter {
    margin-top: 5px;
    width: 316px;
    height: 29px;
}
.signal-tree {
    margin-top: 5px;
    width: 316px;
    height: 756px;
    padding-top: 2px;
    border: 2px solid #5d6272;
    letter-spacing: .1px;
}
.signal-tree .row {
    margin-left: -1.5px;
}
.signal-tree .guides {
    left: -2px;
    top: -2px;
}
.group {
    width: 294px;
    padding-right: 0;
    background: #363b4b;
}
.hovered {
    background: linear-gradient(90deg, transparent 0 47px, #676a76 47px);
    color: #e4e5e8;
    margin-right: 2px;
}
.cursor {
    position: absolute;
    left: 86px;
    top: 9px;
}
.signal-scroll {
    top: 4px;
    right: 1px;
    height: 732px;
    background: #6a6e7d;
}
.mark-signal {
    left: 2px;
    top: 83px;
    width: 289px;
    height: 44px;
    border-width: 7px;
}
.connect-row {
    display: flex;
    justify-content: flex-end;
    margin-top: -5px;
    margin-right: -4px;
}
.connect {
    display: flex;
    align-items: center;
    justify-content: center;
    width: 119px;
    height: 46px;
    border: 7px solid #ffff00;
    border-radius: 3px;
    background: #262b3a;
}
.bottom-line {
    height: 2px;
    margin-top: 10px;
    background: #cfd0d4;
}
```
